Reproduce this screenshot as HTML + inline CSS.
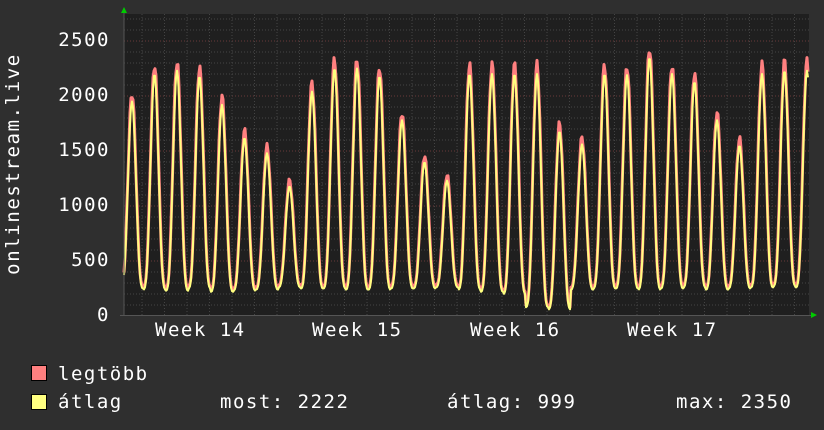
<!DOCTYPE html>
<html><head><meta charset="utf-8"><style>
html,body{margin:0;padding:0;background:#2f2f2f;}
body{width:824px;height:430px;overflow:hidden;position:relative;font-family:"DejaVu Sans Mono","Liberation Mono",monospace;color:#fff;}
.t{position:absolute;font-size:19px;white-space:pre;line-height:1;letter-spacing:1.5px;}
.sw{position:absolute;width:14px;height:14px;border:1px solid #000;}
</style></head><body>
<svg id="g" width="824" height="430" style="position:absolute;left:0;top:0">
<rect x="124" y="14" width="685" height="301" fill="#1f1f1f"/>
<g id="grid"></g>
<path id="mx" fill="none" stroke="#ff8080" stroke-width="3" stroke-linejoin="round"/>
<path id="av" fill="none" stroke="#ffff80" stroke-width="2" stroke-linejoin="round"/>
<line x1="124" y1="10" x2="124" y2="316" stroke="#555" stroke-width="1"/>
<line x1="120" y1="315.5" x2="812" y2="315.5" stroke="#555" stroke-width="1"/>
<polygon points="121,13 127,13 124,7" fill="#00cc00"/>
<polygon points="811,312 811,318 817,315" fill="#00cc00"/>
<text x="0" y="0" transform="translate(19,164) rotate(-90)" text-anchor="middle" font-family="DejaVu Sans Mono, monospace" font-size="19" letter-spacing="1.6" fill="#fff">onlinestream.live</text>
</svg>
<div class="t" style="right:714px;top:31px">2500</div>
<div class="t" style="right:714px;top:86px">2000</div>
<div class="t" style="right:714px;top:141px">1500</div>
<div class="t" style="right:714px;top:196px">1000</div>
<div class="t" style="right:714px;top:251px">500</div>
<div class="t" style="right:714px;top:306px">0</div>
<div class="t" style="left:155px;top:321px">Week 14</div>
<div class="t" style="left:312px;top:321px">Week 15</div>
<div class="t" style="left:470px;top:321px">Week 16</div>
<div class="t" style="left:627px;top:321px">Week 17</div>
<div class="sw" style="left:31px;top:365px;background:#ff8080"></div>
<div class="t" style="left:58px;top:365px">legtöbb</div>
<div class="sw" style="left:31px;top:394px;background:#ffff80"></div>
<div class="t" style="left:58px;top:393px">átlag</div>
<div class="t" style="left:220px;top:393px">most: 2222</div>
<div class="t" style="left:447px;top:393px">átlag: 999</div>
<div class="t" style="left:676px;top:393px">max: 2350</div>
<script>
var grid=document.getElementById('grid'),s='';
function Y(v){return 316-v*0.11;}
for(var v=100;v<=2700;v+=100){var y=Y(v);if(y<14)break;s+='<line x1="124" x2="809" y1="'+y+'" y2="'+y+'" stroke="'+(v%500==0?'#6a3a3a':'#444')+'" stroke-dasharray="1,2"/>';}
for(var x=142;x<809;x+=22.5){s+='<line y1="14" y2="315" x1="'+x+'" x2="'+x+'" stroke="#444" stroke-dasharray="1,2"/>';}
grid.innerHTML=s;
var peaks=[1950,2200,2230,2180,1920,1620,1480,1180,2040,2250,2250,2180,1780,1400,1230,2200,2200,2200,2200,1680,1560,2200,2190,2350,2200,2130,1780,1550,2200,2230,2230];
var mn=[250,240,230,250,220,230,240,260,250,250,240,240,250,250,260,240,220,200,80,60,240,250,250,240,250,260,240,250,260,270,260];
var pm='',pa='';
for(var x=124;x<=808;x+=1){
 var t=(x-132)/22.5, i=Math.round(t); if(i<0)i=0;if(i>30)i=30;
 var f=t-Math.round(t); var c=Math.cos(f*Math.PI*2);
 var e=Math.pow((c+1)/2,1.6);
 var lo=mn[i],hi=peaks[i];
 var a=lo+(hi-lo)*e;
 var m=a*(1.03+0.02*Math.sin(x*1.7))+15;
 pa+=(x==124?'M':'L')+x+','+Y(a).toFixed(1);
 pm+=(x==124?'M':'L')+x+','+Y(Math.min(m,2480)).toFixed(1);
}
document.getElementById('mx').setAttribute('d',pm);
document.getElementById('av').setAttribute('d',pa);
</script>
</body></html>
